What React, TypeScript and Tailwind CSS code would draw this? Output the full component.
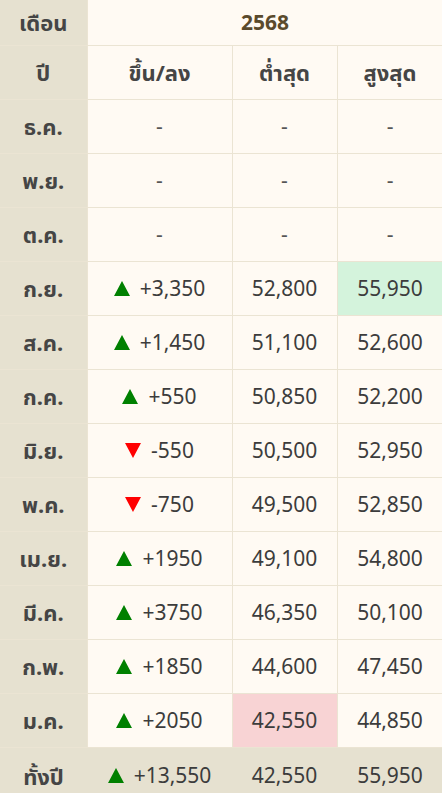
import React from "react";

type Row = {
  month: string;
  change: string | null;
  dir?: "up" | "down";
  low: string;
  high: string;
  lowMark?: boolean;
  highMark?: boolean;
};

const rows: Row[] = [
  { month: "ธ.ค.", change: null, low: "-", high: "-" },
  { month: "พ.ย.", change: null, low: "-", high: "-" },
  { month: "ต.ค.", change: null, low: "-", high: "-" },
  { month: "ก.ย.", change: "+3,350", dir: "up", low: "52,800", high: "55,950", highMark: true },
  { month: "ส.ค.", change: "+1,450", dir: "up", low: "51,100", high: "52,600" },
  { month: "ก.ค.", change: "+550", dir: "up", low: "50,850", high: "52,200" },
  { month: "มิ.ย.", change: "-550", dir: "down", low: "50,500", high: "52,950" },
  { month: "พ.ค.", change: "-750", dir: "down", low: "49,500", high: "52,850" },
  { month: "เม.ย.", change: "+1950", dir: "up", low: "49,100", high: "54,800" },
  { month: "มี.ค.", change: "+3750", dir: "up", low: "46,350", high: "50,100" },
  { month: "ก.พ.", change: "+1850", dir: "up", low: "44,600", high: "47,450" },
  { month: "ม.ค.", change: "+2050", dir: "up", low: "42,550", high: "44,850", lowMark: true },
];

function Arrow({ dir }: { dir: "up" | "down" }) {
  return dir === "up" ? (
    <svg width="16" height="15" viewBox="0 0 16 15" className="inline-block">
      <polygon points="8,0 16,15 0,15" fill="#008000" />
    </svg>
  ) : (
    <svg width="16" height="15" viewBox="0 0 16 15" className="inline-block">
      <polygon points="0,0 16,0 8,15" fill="#ff0000" />
    </svg>
  );
}

function Change({ value, dir }: { value: string | null; dir?: "up" | "down" }) {
  if (!value || !dir) return <span className="text-[#555]">-</span>;
  return (
    <span className="inline-flex items-center gap-[10px]">
      <Arrow dir={dir} />
      <span>{value}</span>
    </span>
  );
}

export default function App() {
  const cell = "border border-[#ebe4d3] text-center align-middle";
  const head = "font-bold text-[#454545] text-[22px]";
  return (
    <div
      className="w-[442px] h-[793px] overflow-hidden bg-[#fffaf3] text-[#3c3c3c]"
      style={{ fontFamily: '"Noto Sans", "Noto Sans Thai", sans-serif' }}
    >
      <table className="table-fixed border-collapse w-[443px] -mt-px">
        <colgroup>
          <col className="w-[87px]" />
          <col className="w-[145px]" />
          <col className="w-[105px]" />
          <col className="w-[106px]" />
        </colgroup>
        <tbody className="text-[21px]">
          <tr className="h-[46px]">
            <th className={`${cell} ${head} bg-[#e6e1d0] border-l-0`}>เดือน</th>
            <th colSpan={3} className={`${cell} font-bold text-[21px] text-[#5a4a2c]`}>2568</th>
          </tr>
          <tr className="h-[54px]">
            <th className={`${cell} ${head} bg-[#e6e1d0] border-l-0`}>ปี</th>
            <th className={`${cell} ${head}`}>ขึ้น/ลง</th>
            <th className={`${cell} ${head}`}>ต่ำสุด</th>
            <th className={`${cell} ${head}`}>สูงสุด</th>
          </tr>
          {rows.map((r) => (
            <tr key={r.month} className="h-[54px]">
              <th className={`${cell} ${head} bg-[#e6e1d0] border-l-0`}>{r.month}</th>
              <td className={cell}>
                <Change value={r.change} dir={r.dir} />
              </td>
              <td className={`${cell} ${r.lowMark ? "bg-[#f8d3d4]" : ""} ${r.low === "-" ? "text-[#555]" : ""}`}>{r.low}</td>
              <td className={`${cell} ${r.highMark ? "bg-[#d4f3dc]" : ""} ${r.high === "-" ? "text-[#555]" : ""}`}>{r.high}</td>
            </tr>
          ))}
          <tr className="h-[60px] bg-[#e6e1d0]">
            <th className={`${head} text-center align-top pt-[12px]`}>ทั้งปี</th>
            <td className="text-center align-top pt-[12px]">
              <Change value="+13,550" dir="up" />
            </td>
            <td className="text-center align-top pt-[12px]">42,550</td>
            <td className="text-center align-top pt-[12px]">55,950</td>
          </tr>
        </tbody>
      </table>
    </div>
  );
}
